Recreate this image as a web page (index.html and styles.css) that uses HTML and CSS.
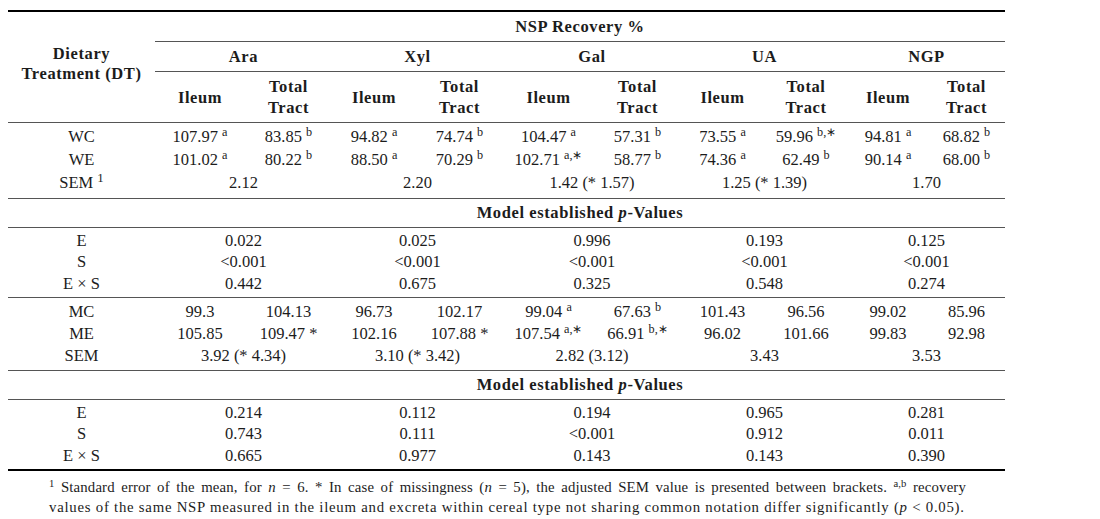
FILE: index.html
```html
<!DOCTYPE html>
<html lang="en">
<head>
<meta charset="utf-8">
<title>NSP Recovery</title>
<link rel="stylesheet" href="styles.css">
</head>
<body>
<div class="page">
<table class="data">
  <colgroup>
    <col class="c0"><col class="c1"><col class="c2"><col class="c3"><col class="c4"><col class="c5"><col class="c6"><col class="c7"><col class="c8"><col class="c9"><col class="c10">
  </colgroup>
  <thead>
    <tr class="h1">
      <th rowspan="3" class="dt">Dietary<br>Treatment (DT)</th>
      <th colspan="10">NSP Recovery %</th>
    </tr>
    <tr class="h2">
      <th colspan="2">Ara</th><th colspan="2">Xyl</th><th colspan="2">Gal</th><th colspan="2">UA</th><th colspan="2">NGP</th>
    </tr>
    <tr class="h3">
      <th>Ileum</th><th>Total<br>Tract</th>
      <th>Ileum</th><th>Total<br>Tract</th>
      <th>Ileum</th><th>Total<br>Tract</th>
      <th>Ileum</th><th>Total<br>Tract</th>
      <th>Ileum</th><th>Total<br>Tract</th>
    </tr>
  </thead>
  <tbody>
    <tr class="sr first">
      <td>WC</td>
      <td>107.97 <sup>a</sup></td><td>83.85 <sup>b</sup></td>
      <td>94.82 <sup>a</sup></td><td>74.74 <sup>b</sup></td>
      <td>104.47 <sup>a</sup></td><td>57.31 <sup>b</sup></td>
      <td>73.55 <sup>a</sup></td><td>59.96 <sup>b,∗</sup></td>
      <td>94.81 <sup>a</sup></td><td>68.82 <sup>b</sup></td>
    </tr>
    <tr class="sr">
      <td>WE</td>
      <td>101.02 <sup>a</sup></td><td>80.22 <sup>b</sup></td>
      <td>88.50 <sup>a</sup></td><td>70.29 <sup>b</sup></td>
      <td>102.71 <sup>a,∗</sup></td><td>58.77 <sup>b</sup></td>
      <td>74.36 <sup>a</sup></td><td>62.49 <sup>b</sup></td>
      <td>90.14 <sup>a</sup></td><td>68.00 <sup>b</sup></td>
    </tr>
    <tr class="sr last ruled">
      <td>SEM <sup class="num">1</sup></td>
      <td colspan="2">2.12</td><td colspan="2">2.20</td><td colspan="2">1.42 (* 1.57)</td><td colspan="2">1.25 (* 1.39)</td><td colspan="2">1.70</td>
    </tr>
    <tr class="model ruled">
      <td></td>
      <td colspan="10">Model established <i>p</i>-Values</td>
    </tr>
    <tr class="nr first">
      <td>E</td>
      <td colspan="2">0.022</td><td colspan="2">0.025</td><td colspan="2">0.996</td><td colspan="2">0.193</td><td colspan="2">0.125</td>
    </tr>
    <tr class="nr">
      <td>S</td>
      <td colspan="2">&lt;0.001</td><td colspan="2">&lt;0.001</td><td colspan="2">&lt;0.001</td><td colspan="2">&lt;0.001</td><td colspan="2">&lt;0.001</td>
    </tr>
    <tr class="nr last ruled">
      <td>E × S</td>
      <td colspan="2">0.442</td><td colspan="2">0.675</td><td colspan="2">0.325</td><td colspan="2">0.548</td><td colspan="2">0.274</td>
    </tr>
    <tr class="mr first">
      <td>MC</td>
      <td>99.3</td><td>104.13</td>
      <td>96.73</td><td>102.17</td>
      <td>99.04 <sup>a</sup></td><td>67.63 <sup>b</sup></td>
      <td>101.43</td><td>96.56</td>
      <td>99.02</td><td>85.96</td>
    </tr>
    <tr class="mr">
      <td>ME</td>
      <td>105.85</td><td>109.47 *</td>
      <td>102.16</td><td>107.88 *</td>
      <td>107.54 <sup>a,∗</sup></td><td>66.91 <sup>b,∗</sup></td>
      <td>96.02</td><td>101.66</td>
      <td>99.83</td><td>92.98</td>
    </tr>
    <tr class="mr last ruled">
      <td>SEM</td>
      <td colspan="2">3.92 (* 4.34)</td><td colspan="2">3.10 (* 3.42)</td><td colspan="2">2.82 (3.12)</td><td colspan="2">3.43</td><td colspan="2">3.53</td>
    </tr>
    <tr class="model ruled">
      <td></td>
      <td colspan="10">Model established <i>p</i>-Values</td>
    </tr>
    <tr class="nr first">
      <td>E</td>
      <td colspan="2">0.214</td><td colspan="2">0.112</td><td colspan="2">0.194</td><td colspan="2">0.965</td><td colspan="2">0.281</td>
    </tr>
    <tr class="nr">
      <td>S</td>
      <td colspan="2">0.743</td><td colspan="2">0.111</td><td colspan="2">&lt;0.001</td><td colspan="2">0.912</td><td colspan="2">0.011</td>
    </tr>
    <tr class="nr last end">
      <td>E × S</td>
      <td colspan="2">0.665</td><td colspan="2">0.977</td><td colspan="2">0.143</td><td colspan="2">0.143</td><td colspan="2">0.390</td>
    </tr>
  </tbody>
</table>
<div class="notes">
  <div class="line1"><sup>1</sup> Standard error of the mean, for <i>n</i> = 6. * In case of missingness (<i>n</i> = 5), the adjusted SEM value is presented between brackets. <sup>a,b</sup> recovery</div>
  <div class="line2">values of the same NSP measured in the ileum and excreta within cereal type not sharing common notation differ significantly (<i>p</i> &lt; 0.05).</div>
</div>
</div>
</body>
</html>
```

FILE: styles.css
```css
html, body {
  margin: 0;
  padding: 0;
  background: #ffffff;
}

body {
  color: #1c1c1c;
  font-family: "Liberation Serif", "Times New Roman", serif;
}

.page {
  padding: 10px 0 0 8px;
}

.data {
  border-collapse: collapse;
  table-layout: fixed;
  width: 997px;
  font-size: 16.5px;
  border-top: 2px solid #000;
}

.c0 { width: 147px; }
.c1 { width: 90px; }
.c2 { width: 87px; }
.c3 { width: 84px; }
.c4 { width: 87px; }
.c5 { width: 91px; }
.c6 { width: 87px; }
.c7 { width: 83px; }
.c8 { width: 84px; }
.c9 { width: 80px; }
.c10 { width: 77px; }

.data th,
.data td {
  padding: 0;
  text-align: center;
  vertical-align: middle;
  white-space: nowrap;
}

.data th {
  font-weight: bold;
  letter-spacing: 0.6px;
}

.h1 th,
.h2 th {
  line-height: 29px;
  border-bottom: 1px solid #555;
}

.h1 th.dt {
  line-height: 20px;
  padding-bottom: 7px;
  border-bottom: 1px solid #555;
}

.h3 th {
  line-height: 21px;
  padding: 4px 0;
  border-bottom: 1px solid #555;
}

.sr td { line-height: 23px; }
.nr td { line-height: 21.4px; }
.mr td { line-height: 21.9px; }

.sr.first td { padding-top: 2px; }
.sr.last td { padding-bottom: 4px; }
.nr.first td { padding-top: 2px; }
.nr.last td { padding-bottom: 3px; }
.mr.first td { padding-top: 3px; }
.mr.last td { padding-bottom: 3px; }

.ruled td {
  border-bottom: 1px solid #555;
}

.end td {
  border-bottom: 2px solid #000;
  padding-bottom: 3px;
}

.model td {
  line-height: 28px;
  font-weight: bold;
  letter-spacing: 0.6px;
}

sup {
  font-size: 0.74em;
  line-height: 0;
  vertical-align: 0.5em;
}

sup.num {
  font-size: 0.78em;
}

.notes {
  margin: 6px 0 0 41px;
  width: 917px;
  font-size: 14.8px;
  line-height: 20px;
}

.notes .line1 {
  white-space: nowrap;
  letter-spacing: 0.15px;
  text-align: justify;
  text-align-last: justify;
}

.notes .line2 {
  white-space: nowrap;
  letter-spacing: 0.75px;
}

.notes sup {
  font-size: 0.72em;
}
```
